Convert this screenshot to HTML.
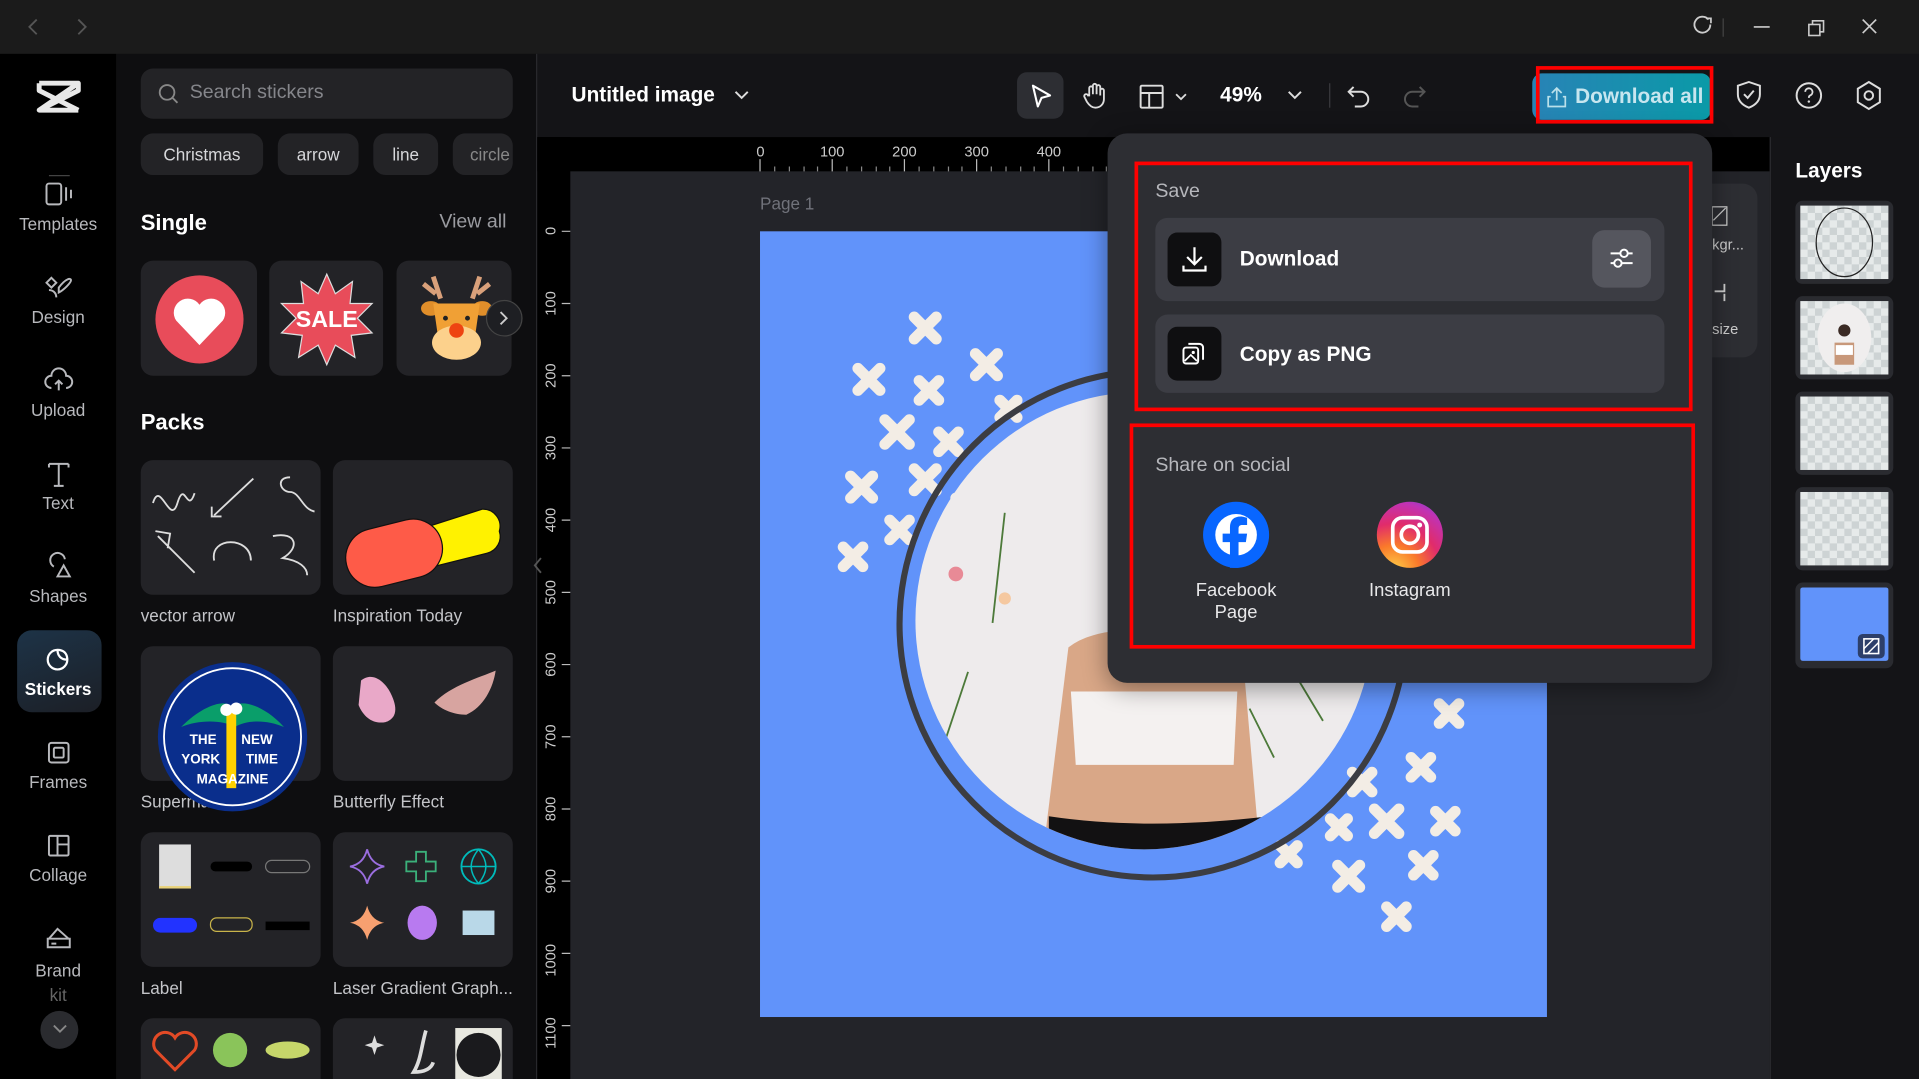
<!DOCTYPE html>
<html><head><meta charset="utf-8"><style>
*{box-sizing:border-box;margin:0;padding:0}
html,body{width:1919px;height:1079px;overflow:hidden;background:#1b1b1b;font-family:"Liberation Sans",sans-serif}
#w{position:absolute;left:0;top:0;width:1568px;height:882px;transform:scale(1.22385);transform-origin:0 0;overflow:hidden}
.a{position:absolute}
.t{position:absolute;white-space:nowrap}
.nav{color:#b8b9bd;font-size:14px;text-align:center;width:95px;left:0}
.card{position:absolute;background:#232327;border-radius:10px}
.lab{position:absolute;color:#c4c5c9;font-size:14px}
.chip{position:absolute;top:109px;height:34px;background:#232326;border-radius:10px;color:#d6d7da;font-size:14px;line-height:34px;text-align:center}
svg{position:absolute;overflow:visible}
</style></head><body><div id="w">
<div class="a" style="left:0;top:0;width:1568px;height:44px;background:#1b1b1b"></div>
<svg style="left:18px;top:13px" width="60" height="18"><path d="M12 3L6 9l6 6M46 3l6 6-6 6" stroke="#555" stroke-width="1.5" fill="none"/></svg>
<svg style="left:1380px;top:12px" width="160" height="20"><path d="M16 4a6.5 6.5 0 1 0 1.5 4" stroke="#ccc" stroke-width="1.5" fill="none"/><path d="M14 3h4v4" stroke="#ccc" stroke-width="1.4" fill="none"/><path d="M28 3v15" stroke="#444"/><path d="M53 10h13" stroke="#ccc" stroke-width="1.4"/><rect x="98" y="8" width="9" height="9" stroke="#ccc" fill="none" stroke-width="1.3"/><path d="M101 8V5h9v9h-3" stroke="#ccc" fill="none" stroke-width="1.3"/><path d="M142 4l11 11M153 4l-11 11" stroke="#ccc" stroke-width="1.4"/></svg>
<div class="a" style="left:0;top:44px;width:95px;height:838px;background:#000"></div>
<svg style="left:30px;top:64px" width="36" height="30"><path d="M2 4h32L2 26h32M2 4v6l32 16M34 4v6L2 26" stroke="#e8e8e8" stroke-width="4" fill="none" stroke-linejoin="round"/></svg>
<div class="a" style="left:40px;top:143px;width:17px;height:1px;background:#444"></div>
<svg style="left:36px;top:147px" width="26" height="24"><rect x="2" y="3" width="12" height="17" rx="2" stroke="#b8b9bd" stroke-width="1.6" fill="none"/><path d="M18 6v11M22 8v7" stroke="#b8b9bd" stroke-width="1.6"/></svg>
<div class="t nav" style="top:175px">Templates</div>
<svg style="left:36px;top:223px" width="24" height="24"><path d="M6 4l4 4-4 4-4-4zM12 12c6-8 10-8 10-6s-6 8-10 10zM4 14c3 0 6 2 6 6" stroke="#b8b9bd" stroke-width="1.6" fill="none"/></svg>
<div class="t nav" style="top:251px">Design</div>
<svg style="left:36px;top:299px" width="24" height="24"><path d="M6 18a5 5 0 0 1 0-10 6 6 0 0 1 12 0 5 5 0 0 1 0 10M12 20v-8M9 15l3-3 3 3" stroke="#b8b9bd" stroke-width="1.6" fill="none"/></svg>
<div class="t nav" style="top:327px">Upload</div>
<svg style="left:36px;top:375px" width="24" height="24"><path d="M4 4h16M12 4v18M8 22h8M4 4v3M20 4v3" stroke="#b8b9bd" stroke-width="1.6" fill="none"/></svg>
<div class="t nav" style="top:403px">Text</div>
<svg style="left:36px;top:451px" width="24" height="24"><path d="M8 12a6 6 0 1 1 9-6M11 20l5-9 5 9z" stroke="#b8b9bd" stroke-width="1.6" fill="none"/></svg>
<div class="t nav" style="top:479px">Shapes</div>
<div class="a" style="left:14px;top:515px;width:69px;height:67px;border-radius:12px;background:linear-gradient(160deg,#1d3347,#1c1f26)"></div>
<svg style="left:36px;top:527px" width="24" height="24"><path d="M19 12a8 8 0 1 1-8-8c0 5 3 8 8 8zM11 4c5 0 8 3 8 8" stroke="#fff" stroke-width="1.8" fill="none"/></svg>
<div class="t nav" style="top:555px;color:#fff;font-weight:bold">Stickers</div>
<svg style="left:36px;top:603px" width="24" height="24"><rect x="4" y="4" width="16" height="16" rx="2" stroke="#b8b9bd" stroke-width="1.6" fill="none"/><rect x="8" y="8" width="8" height="8" rx="1" stroke="#b8b9bd" stroke-width="1.6" fill="none"/></svg>
<div class="t nav" style="top:631px">Frames</div>
<svg style="left:36px;top:679px" width="24" height="24"><rect x="4" y="4" width="16" height="16" rx="1" stroke="#b8b9bd" stroke-width="1.6" fill="none"/><path d="M11 4v16M11 11h9" stroke="#b8b9bd" stroke-width="1.6"/></svg>
<div class="t nav" style="top:707px">Collage</div>
<svg style="left:36px;top:755px" width="24" height="24"><path d="M4 12l7-8 9 8M3 12h18v7H3zM6 16h4" stroke="#b8b9bd" stroke-width="1.6" fill="none"/></svg>
<div class="t nav" style="top:783px;line-height:20px">Brand<br><span style="color:#666">kit</span></div>
<div class="a" style="left:33px;top:826px;width:31px;height:31px;border-radius:50%;background:#2a2b2f"></div>
<svg style="left:43px;top:837px" width="12" height="8"><path d="M1 1l5 5 5-5" stroke="#888" stroke-width="1.5" fill="none"/></svg>
<div class="a" style="left:95px;top:44px;width:344px;height:838px;background:#0e0e10"></div>
<div class="a" style="left:115px;top:56px;width:304px;height:41px;background:#232326;border-radius:10px"></div>
<svg style="left:129px;top:68px" width="18" height="18"><circle cx="7.5" cy="7.5" r="6" stroke="#888" stroke-width="1.5" fill="none"/><path d="M12 12l4 4" stroke="#888" stroke-width="1.5"/></svg>
<div class="t" style="left:155px;top:67px;color:#85868b;font-size:16px">Search stickers</div>
<div class="chip" style="left:115px;width:100px">Christmas</div>
<div class="chip" style="left:227px;width:66px">arrow</div>
<div class="chip" style="left:305px;width:53px">line</div>
<div class="chip" style="left:370px;width:49px;overflow:hidden;text-align:left;padding-left:14px;color:#888">circle</div>
<div class="t" style="left:115px;top:172px;color:#fff;font-size:18px;font-weight:bold">Single</div>
<div class="t" style="left:359px;top:173px;color:#9a9ba0;font-size:16px">View all</div>
<div class="card" style="left:115px;top:213px;width:95px;height:94px"></div>
<div class="card" style="left:220px;top:213px;width:93px;height:94px"></div>
<div class="card" style="left:324px;top:213px;width:94px;height:94px"></div>
<svg style="left:126px;top:224px" width="74" height="74"><circle cx="37" cy="37" r="36" fill="#e84c5a"/><path d="M37 58L18 38a11 11 0 0 1 19-13 11 11 0 0 1 19 13z" fill="#fff"/></svg>
<svg style="left:228px;top:222px" width="78" height="78"><polygon points="39,2 46,18 60,8 58,26 76,26 64,38 76,50 59,52 62,70 46,60 39,76 32,60 16,70 19,52 2,50 14,38 2,26 20,26 18,8 32,18" fill="#e84c5a" stroke="#ddd" stroke-width="1"/><text x="39" y="45" text-anchor="middle" font-family="Liberation Sans" font-weight="bold" font-size="19" fill="#fff">SALE</text></svg>
<svg style="left:340px;top:222px" width="66" height="76"><path d="M14 4l6 18M6 10l10 8M52 4l-6 18M60 10l-10 8" stroke="#d9a07a" stroke-width="4"/><ellipse cx="12" cy="30" rx="8" ry="6" fill="#e08e2a"/><ellipse cx="54" cy="30" rx="8" ry="6" fill="#e08e2a"/><path d="M14 26h38l-4 28H18z" fill="#f0a035"/><ellipse cx="33" cy="58" rx="20" ry="14" fill="#fcd18c"/><circle cx="33" cy="48" r="6" fill="#e41"/><circle cx="24" cy="38" r="2" fill="#222"/><circle cx="42" cy="38" r="2" fill="#222"/></svg>
<div class="a" style="left:397px;top:245px;width:30px;height:30px;border-radius:50%;background:#1e1f23;border:1px solid #444"></div>
<svg style="left:408px;top:254px" width="8" height="12"><path d="M1 1l5 5-5 5" stroke="#ccc" stroke-width="1.5" fill="none"/></svg>
<div class="t" style="left:115px;top:335px;color:#fff;font-size:18px;font-weight:bold">Packs</div>
<div class="card" style="left:115px;top:376px;width:147px;height:110px"></div>
<div class="card" style="left:272px;top:376px;width:147px;height:110px"></div>
<svg style="left:115px;top:376px" width="147" height="110"><path d="M10 35c6-20 14 20 20 0s8 10 14 -8M92 15L60 45M58 38v8h8M122 14c-12 0-8 12 0 12 8 0 10 14 20 16M14 62l30 30M12 58l12 2-2 12M60 82c-4-20 30-20 30 0M108 62c20-4 22 10 8 18 14 2 20 8 20 14" stroke="#ddd" stroke-width="1.5" fill="none"/></svg>
<svg style="left:272px;top:376px" width="147" height="110"><path d="M66 58l56-18a14 14 0 0 1 14 18 14 14 0 0 1 -10 18l-56 14z" fill="#fff200" stroke="#111" stroke-width="1"/><rect x="10" y="52" width="80" height="48" rx="24" transform="rotate(-14 50 76)" fill="#fe5b48" stroke="#111"/></svg>
<div class="lab" style="left:115px;top:495px">vector arrow</div>
<div class="lab" style="left:272px;top:495px">Inspiration Today</div>
<div class="card" style="left:115px;top:528px;width:147px;height:110px"></div>
<div class="card" style="left:272px;top:528px;width:147px;height:110px"></div>
<div class="lab" style="left:115px;top:647px">Supermarket</div>
<svg style="left:128px;top:540px" width="124" height="124"><circle cx="62" cy="62" r="61" fill="#0a2e8c"/><circle cx="62" cy="62" r="56" fill="none" stroke="#fff" stroke-width="1.5"/><path d="M20 54c20-20 40-24 42-14 2-10 24-6 42 14-14-6-30-6-40 0-10-6-30-6-44 0z" fill="#0a9e6a"/><rect x="57" y="40" width="8" height="64" fill="#ffd100"/><circle cx="57" cy="40" r="5" fill="#fff"/><circle cx="65" cy="39" r="5" fill="#fff"/><g font-family="Liberation Sans" font-weight="bold" font-size="11" fill="#fff" text-anchor="middle"><text x="38" y="68">THE</text><text x="82" y="68">NEW</text><text x="36" y="84">YORK</text><text x="86" y="84">TIME</text><text x="62" y="100">MAGAZINE</text></g></svg>
<svg style="left:285px;top:540px" width="130" height="60"><path d="M10 16c10-8 20 2 24 10s8 20-4 24c-10 2-18-4-22-14z" fill="#e9a8c8"/><path d="M70 34c14-14 36-20 50-26-2 14-10 30-24 36-10 0-20-4-26-10z" fill="#d7a4a0"/></svg>
<div class="lab" style="left:272px;top:647px">Butterfly Effect</div>
<div class="card" style="left:115px;top:680px;width:147px;height:110px"></div>
<div class="card" style="left:272px;top:680px;width:147px;height:110px"></div>
<svg style="left:115px;top:680px" width="147" height="110"><rect x="15" y="10" width="26" height="36" fill="#ddd"/><rect x="15" y="44" width="26" height="2" fill="#e8d27a"/><rect x="57" y="24" width="34" height="8" rx="4" fill="#000"/><rect x="102" y="23" width="36" height="10" rx="5" stroke="#777" fill="none"/><rect x="10" y="70" width="36" height="12" rx="6" fill="#2233ff"/><rect x="57" y="70" width="34" height="11" rx="5" stroke="#c9b44a" fill="none"/><rect x="102" y="73" width="36" height="7" fill="#000"/></svg>
<svg style="left:272px;top:680px" width="147" height="110"><path d="M28 14q3 12 14 14q-11 2-14 14q-3-12-14-14q11-2 14-14z" stroke="#9b6ee0" stroke-width="1.5" fill="none"/><path d="M68 16h8v8h8v8h-8v8h-8v-8h-8v-8h8z" stroke="#3bb07a" stroke-width="1.5" fill="none"/><circle cx="119" cy="28" r="14" stroke="#0bb" stroke-width="1.5" fill="none"/><path d="M105 28h28M119 14c-8 10-8 18 0 28M119 14c8 10 8 18 0 28" stroke="#0bb" stroke-width="1.2" fill="none"/><path d="M28 60q3 12 14 14q-11 2-14 14q-3-12-14-14q11-2 14-14z" fill="#f7a070"/><ellipse cx="73" cy="74" rx="12" ry="14" fill="#b87af0"/><rect x="106" y="64" width="26" height="20" fill="#b9d8e8"/></svg>
<div class="lab" style="left:115px;top:799px">Label</div>
<div class="lab" style="left:272px;top:799px">Laser Gradient Graph...</div>
<div class="card" style="left:115px;top:832px;width:147px;height:60px"></div>
<div class="card" style="left:272px;top:832px;width:147px;height:60px"></div>
<svg style="left:115px;top:832px" width="147" height="50"><path d="M28 42L12 26a8 8 0 0 1 16-10 8 8 0 0 1 16 10z" stroke="#e24a26" stroke-width="2.5" fill="none"/><circle cx="73" cy="26" r="14" fill="#8ac45a"/><ellipse cx="120" cy="26" rx="18" ry="7" fill="#c6d66a"/></svg>
<svg style="left:272px;top:832px" width="147" height="50"><path d="M34 14l2 6 6 2-6 2-2 6-2-6-6-2 6-2z" fill="#ddd"/><rect x="100" y="8" width="38" height="42" fill="#e8e8e0"/><circle cx="119" cy="30" r="18" fill="#1a1a1d"/><path d="M76 10c-4 14-4 24-10 34 8 0 14-2 16-8" stroke="#ddd" stroke-width="3" fill="none"/></svg>
<div class="a" style="left:439px;top:44px;width:1129px;height:68px;background:#141417"></div>
<div class="a" style="left:438px;top:44px;width:1px;height:838px;background:#2a2a2e"></div>
<div class="t" style="left:467px;top:68px;color:#fff;font-size:17px;font-weight:bold">Untitled image</div>
<svg style="left:600px;top:74px" width="12" height="8"><path d="M1 1l5 5 5-5" stroke="#ddd" stroke-width="1.6" fill="none"/></svg>
<div class="a" style="left:831px;top:59px;width:38px;height:38px;border-radius:8px;background:#2d2e33"></div>
<svg style="left:840px;top:67px" width="22" height="22"><path d="M4 3l14 8-7 2-3 7z" stroke="#fff" stroke-width="1.7" fill="none" stroke-linejoin="round"/></svg>
<svg style="left:883px;top:66px" width="24" height="24"><path d="M7 12V6a1.5 1.5 0 0 1 3 0v5V4a1.5 1.5 0 0 1 3 0v7V5a1.5 1.5 0 0 1 3 0v7V8a1.5 1.5 0 0 1 3 0v7c0 4-3 7-7 7-3 0-5-2-7-5l-2-4a1.5 1.5 0 0 1 3-1z" stroke="#ddd" stroke-width="1.5" fill="none"/></svg>
<svg style="left:930px;top:68px" width="44" height="22"><rect x="2" y="2" width="18" height="18" rx="1" stroke="#ddd" stroke-width="1.6" fill="none"/><path d="M2 8h18M9 8v12" stroke="#ddd" stroke-width="1.6"/><path d="M31 9l4 4 4-4" stroke="#ddd" stroke-width="1.5" fill="none"/></svg>
<div class="t" style="left:997px;top:68px;color:#fff;font-size:17px;font-weight:bold">49%</div>
<svg style="left:1052px;top:74px" width="14" height="8"><path d="M1 1l5 5 5-5" stroke="#ddd" stroke-width="1.6" fill="none"/></svg>
<div class="a" style="left:1086px;top:68px;width:1px;height:20px;background:#3a3a3e"></div>
<svg style="left:1100px;top:67px" width="70" height="22"><path d="M6 4L2 8l4 4M2 8h10a6 6 0 0 1 0 12H7" stroke="#ddd" stroke-width="1.6" fill="none"/><path d="M60 4l4 4-4 4M64 8H54a6 6 0 0 0 0 12h5" stroke="#555" stroke-width="1.6" fill="none"/></svg>
<div class="a" style="left:1252px;top:60px;width:146px;height:38px;border-radius:8px;background:linear-gradient(90deg,#2883b6,#0a9aa7)"></div>
<div class="a" style="left:1255px;top:54px;width:145px;height:47px;border:3px solid #f00"></div>
<svg style="left:1264px;top:70px" width="16" height="18"><path d="M8 12V2M4 6l4-4 4 4M3 9H1v8h14V9h-2" stroke="#b9e0ea" stroke-width="1.4" fill="none"/></svg>
<div class="t" style="left:1287px;top:69px;color:#c7e6ef;font-size:17px;font-weight:bold">Download all</div>
<svg style="left:1417px;top:65px" width="120" height="26"><path d="M12 2l9 3v7c0 6-4 9-9 11-5-2-9-5-9-11V5z" stroke="#ddd" stroke-width="1.6" fill="none"/><path d="M8 12l3 3 5-6" stroke="#ddd" stroke-width="1.6" fill="none"/><circle cx="61" cy="13" r="10" stroke="#ddd" stroke-width="1.6" fill="none"/><path d="M58 10a3 3 0 1 1 4 3c-1 .5-1 1-1 2" stroke="#ddd" stroke-width="1.5" fill="none"/><circle cx="61" cy="18" r="1" fill="#ddd"/><path d="M110 2l9 5.5v11L110 24l-9-5.5v-11z" stroke="#ddd" stroke-width="1.6" fill="none"/><circle cx="110" cy="13" r="3.5" stroke="#ddd" stroke-width="1.6" fill="none"/></svg>
<div class="a" style="left:439px;top:112px;width:1007px;height:770px;background:#232429"></div>
<div class="a" style="left:439px;top:112px;width:1007px;height:28px;background:#000"></div>
<div class="a" style="left:439px;top:112px;width:27px;height:770px;background:#000"></div>
<svg style="left:466px;top:112px" width="460" height="28"><g font-family="Liberation Sans" font-size="12" fill="#ccc"><text x="152" y="16">0</text><text x="204" y="16">100</text><text x="263" y="16">200</text><text x="322" y="16">300</text><text x="381" y="16">400</text></g><path d="M155 18v10M214 18v10M273 18v10M332 18v10M391 18v10M450 18v10" stroke="#bbb"/><path d="M167 24v4M179 24v4M191 24v4M202 24v4M226 24v4M238 24v4M250 24v4M261 24v4M285 24v4M297 24v4M309 24v4M320 24v4M344 24v4M356 24v4M368 24v4M379 24v4M403 24v4M415 24v4M427 24v4M438 24v4" stroke="#888"/></svg>
<svg style="left:439px;top:140px" width="27" height="742"><g font-family="Liberation Sans" font-size="12" fill="#ccc"><text transform="translate(15 52) rotate(-90)">0</text><text transform="translate(15 118) rotate(-90)">100</text><text transform="translate(15 177) rotate(-90)">200</text><text transform="translate(15 236) rotate(-90)">300</text><text transform="translate(15 295) rotate(-90)">400</text><text transform="translate(15 354) rotate(-90)">500</text><text transform="translate(15 413) rotate(-90)">600</text><text transform="translate(15 472) rotate(-90)">700</text><text transform="translate(15 531) rotate(-90)">800</text><text transform="translate(15 590) rotate(-90)">900</text><text transform="translate(15 658) rotate(-90)">1000</text><text transform="translate(15 717) rotate(-90)">1100</text></g><path d="M20 49h7M20 108h7M20 167h7M20 226h7M20 285h7M20 344h7M20 403h7M20 462h7M20 521h7M20 580h7M20 639h7M20 698h7" stroke="#bbb"/></svg>
<div class="t" style="left:621px;top:158px;color:#70727a;font-size:14px">Page 1</div>
<div class="a" style="left:621px;top:189px;width:643px;height:642px;background:#6193fa"></div>
<svg style="left:621px;top:189px" width="643" height="642">
<defs><clipPath id="c"><circle cx="314" cy="318" r="187"/></clipPath></defs>
<g stroke="#f3ede5" stroke-width="9" stroke-linecap="round">
<path d="M126 70l18 18M144 70l-18 18"/><path d="M80 112l18 18M98 112l-18 18"/><path d="M176 100l18 18M194 100l-18 18"/><path d="M130 122l16 16M146 122l-16 16"/><path d="M102 154l20 20M122 154l-20 20"/><path d="M146 164l16 16M162 164l-16 16"/><path d="M74 200l18 18M92 200l-18 18"/><path d="M126 194l18 18M144 194l-18 18"/><path d="M106 236l16 16M122 236l-16 16"/><path d="M68 258l16 16M84 258l-16 16"/><path d="M196 138l14 14M210 138l-14 14"/><path d="M160 218l16 16M176 218l-16 16"/>
<path d="M555 386l16 16M571 386l-16 16"/><path d="M532 430l16 16M548 430l-16 16"/><path d="M484 442l16 16M500 442l-16 16"/><path d="M552 474l16 16M568 474l-16 16"/><path d="M502 472l20 20M522 472l-20 20"/><path d="M466 480l14 14M480 480l-14 14"/><path d="M425 502l14 14M439 502l-14 14"/><path d="M534 510l16 16M550 510l-16 16"/><path d="M472 518l18 18M490 518l-18 18"/><path d="M512 552l16 16M528 552l-16 16"/>
</g>
<circle cx="321" cy="321" r="207" fill="none" stroke="#3c3d42" stroke-width="5"/>
<circle cx="314" cy="318" r="187" fill="#eeebec"/>
<g clip-path="url(#c)">
<g stroke="#4d7a3a" stroke-width="1.5" fill="none"><path d="M40 270l50-120M120 320l-30 110M200 230l-10 90M150 420l20-60M460 400l-30-50M420 430l-20-40"/></g>
<g fill="#e88a96"><circle cx="160" cy="280" r="6"/><circle cx="100" cy="400" r="6"/><circle cx="380" cy="440" r="6"/></g>
<g fill="#f5c8a0"><circle cx="200" cy="300" r="5"/><circle cx="90" cy="360" r="5"/></g>
<path d="M252 340q15-12 45-14h55q28 2 42 16l14 160H232z" fill="#d9a787"/>
<path d="M254 376h136l-3 60H258z" fill="#f4f1f0"/>
<path d="M236 478q80 12 180 0v30H236z" fill="#121112"/>
</g>
</svg>
<div class="a" style="left:1446px;top:112px;width:122px;height:770px;background:#141417;border-left:1px solid #2a2a2e"></div>
<div class="t" style="left:1467px;top:130px;color:#fff;font-size:17px;font-weight:bold">Layers</div>
<div class="a" style="left:1385px;top:150px;width:51px;height:142px;background:#2d2e33;border-radius:0 12px 12px 0"></div>
<div class="t" style="left:1399px;top:193px;color:#ccc;font-size:12px">kgr...</div>
<div class="t" style="left:1399px;top:262px;color:#ccc;font-size:12px">size</div>
<svg style="left:1398px;top:168px" width="16" height="90"><rect x="1" y="1" width="12" height="15" stroke="#ccc" fill="none"/><path d="M2 12l10-10" stroke="#ccc"/><path d="M3 70h8v-6M11 72v6" stroke="#ccc" stroke-width="1.5" fill="none"/></svg>
<div class="a" style="left:1467px;top:164px;width:80px;height:68px;border-radius:6px;background:#2a2b30"></div>
<div class="a" style="left:1471px;top:168px;width:72px;height:60px;background:repeating-conic-gradient(#cdd3d4 0 25%,#e6eaea 0 50%) 0 0/12px 12px"></div>
<svg style="left:1478px;top:168px" width="60" height="60"><ellipse cx="29" cy="30" rx="23" ry="28" stroke="#222" fill="none"/></svg>
<div class="a" style="left:1467px;top:242px;width:80px;height:68px;border-radius:6px;background:#2a2b30"></div>
<div class="a" style="left:1471px;top:246px;width:72px;height:60px;background:repeating-conic-gradient(#cdd3d4 0 25%,#e6eaea 0 50%) 0 0/12px 12px"></div>
<svg style="left:1471px;top:246px" width="72" height="60"><ellipse cx="36" cy="30" rx="22" ry="28" fill="#f0eeee"/><path d="M28 34h16v18H28z" fill="#c8987a"/><rect x="29" y="36" width="14" height="8" fill="#fff"/><circle cx="36" cy="24" r="5" fill="#3a2a24"/></svg>
<div class="a" style="left:1467px;top:320px;width:80px;height:68px;border-radius:6px;background:#2a2b30"></div>
<div class="a" style="left:1471px;top:324px;width:72px;height:60px;background:repeating-conic-gradient(#cdd3d4 0 25%,#e6eaea 0 50%) 0 0/12px 12px"></div>
<div class="a" style="left:1467px;top:398px;width:80px;height:68px;border-radius:6px;background:#2a2b30"></div>
<div class="a" style="left:1471px;top:402px;width:72px;height:60px;background:repeating-conic-gradient(#cdd3d4 0 25%,#e6eaea 0 50%) 0 0/12px 12px"></div>
<div class="a" style="left:1467px;top:476px;width:80px;height:70px;border-radius:6px;background:#2a2b30"></div>
<div class="a" style="left:1471px;top:480px;width:72px;height:60px;background:#6193fa;border-radius:2px"></div>
<div class="a" style="left:1518px;top:518px;width:22px;height:20px;border-radius:4px;background:#2d3f6a"></div>
<svg style="left:1522px;top:521px" width="14" height="14"><rect x="1" y="1" width="12" height="12" stroke="#fff" fill="none" stroke-width="1.3"/><path d="M1 9l8-8M4 13l9-9" stroke="#fff" stroke-width="1.2"/></svg>
<div class="a" style="left:905px;top:109px;width:494px;height:449px;background:#2d2e33;border-radius:16px;box-shadow:0 4px 20px rgba(0,0,0,.4)"></div>
<div class="a" style="left:927px;top:132px;width:456px;height:204px;border:3px solid #f00"></div>
<div class="t" style="left:944px;top:148px;color:#b6b7bc;font-size:16px">Save</div>
<div class="a" style="left:944px;top:178px;width:416px;height:68px;background:#3c3d44;border-radius:10px"></div>
<div class="a" style="left:954px;top:190px;width:44px;height:44px;background:#0f0f11;border-radius:8px"></div>
<svg style="left:964px;top:200px" width="24" height="24"><path d="M12 2v14M6 10l6 6 6-6M3 17v4h18v-4" stroke="#fff" stroke-width="1.8" fill="none"/></svg>
<div class="t" style="left:1013px;top:202px;color:#fff;font-size:17px;font-weight:bold">Download</div>
<div class="a" style="left:1301px;top:188px;width:48px;height:47px;background:#55565e;border-radius:10px"></div>
<svg style="left:1313px;top:199px" width="24" height="24"><path d="M3 8h18M3 16h18" stroke="#fff" stroke-width="1.6"/><circle cx="14" cy="8" r="3" fill="#55565e" stroke="#fff" stroke-width="1.6"/><circle cx="9" cy="16" r="3" fill="#55565e" stroke="#fff" stroke-width="1.6"/></svg>
<div class="a" style="left:944px;top:257px;width:416px;height:64px;background:#3c3d44;border-radius:10px"></div>
<div class="a" style="left:954px;top:267px;width:44px;height:44px;background:#0f0f11;border-radius:8px"></div>
<svg style="left:965px;top:278px" width="22" height="22"><rect x="2" y="6" width="12" height="13" rx="2" stroke="#fff" stroke-width="1.6" fill="none"/><path d="M6 3h9a3 3 0 0 1 3 3v10" stroke="#fff" stroke-width="1.6" fill="none"/><path d="M3 17l5-5 5 5" stroke="#fff" stroke-width="1.4" fill="none"/><circle cx="10" cy="10" r="1.3" fill="#fff"/></svg>
<div class="t" style="left:1013px;top:280px;color:#fff;font-size:17px;font-weight:bold">Copy as PNG</div>
<div class="a" style="left:923px;top:346px;width:462px;height:184px;border:3px solid #f00"></div>
<div class="t" style="left:944px;top:372px;color:#b6b7bc;font-size:16px">Share on social</div>
<svg style="left:983px;top:410px" width="54" height="54"><circle cx="27" cy="27" r="27" fill="#0866ff"/><circle cx="27" cy="27" r="17" fill="#fff"/><path d="M29 54V33h6l1-7h-7v-4c0-2 1-3 3-3h4v-6c-1 0-3-1-5-1-6 0-9 3-9 9v5h-6v7h6v21z" fill="#0866ff"/></svg>
<div class="t" style="left:960px;top:474px;width:100px;text-align:center;color:#e8e8ea;font-size:15px;line-height:18px">Facebook<br>Page</div>
<svg style="left:1125px;top:410px" width="54" height="54"><defs><radialGradient id="ig" cx="0.25" cy="1.05" r="1.3"><stop offset="0" stop-color="#fdd34a"/><stop offset="0.3" stop-color="#fa7a2a"/><stop offset="0.55" stop-color="#e12c6a"/><stop offset="0.8" stop-color="#c132b4"/><stop offset="1" stop-color="#5b4fe0"/></radialGradient></defs><circle cx="27" cy="27" r="27" fill="url(#ig)"/><rect x="13" y="13" width="28" height="28" rx="8" stroke="#fff" stroke-width="3" fill="none"/><circle cx="27" cy="27" r="7" stroke="#fff" stroke-width="3" fill="none"/><circle cx="35" cy="19" r="2" fill="#fff"/></svg>
<div class="t" style="left:1102px;top:474px;width:100px;text-align:center;color:#e8e8ea;font-size:15px">Instagram</div>
<svg style="left:436px;top:455px" width="8" height="14"><path d="M6 1L1 7l5 6" stroke="#555" stroke-width="1.5" fill="none"/></svg>
</div></body></html>
